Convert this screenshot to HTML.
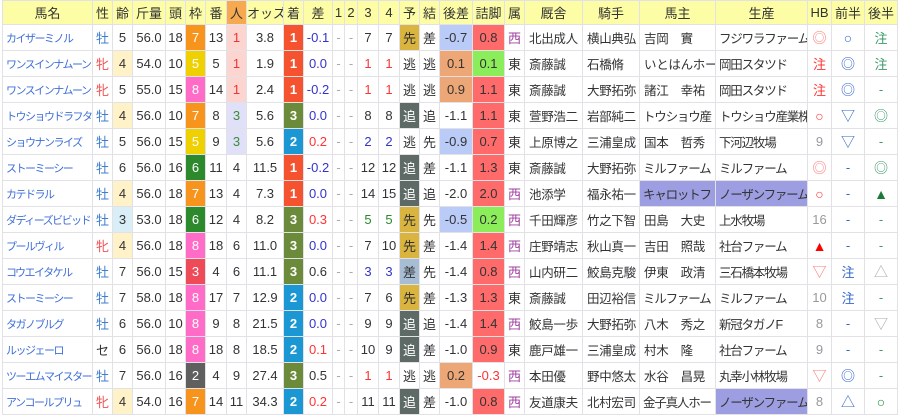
<!DOCTYPE html>
<html><head><meta charset="utf-8"><style>
body{margin:0;background:#fff;width:900px;height:416px;overflow:hidden}
table{position:absolute;left:2px;top:0;width:896px;border-collapse:collapse;table-layout:fixed;font-family:"Liberation Sans","Noto Sans CJK JP",sans-serif;font-size:13px;color:#333}
td,th{border:1px solid #e2e2e6;padding:0;text-align:center;white-space:nowrap;overflow:hidden;height:25px}
th{background:#fdfda6;font-weight:normal;height:23px;font-size:13px}
th.p{background:#f7a950}
td.n{text-align:left;padding-left:3px;color:#3f6fd8;font-size:11px;letter-spacing:-1.5px}
.m{color:#3f7fd0}.f{color:#f05050}
.y{background:#fff2c8}.lb{background:#d9eef6}
.w1{background:#fff}.w2{background:#5f5f5f;color:#fff}.w3{background:#ee4a58;color:#fff}.w5{background:#efd000;color:#fff}.w6{background:#2c8a2c;color:#fff}.w7{background:#f7941d;color:#fff}.w8{background:#ff6cc8;color:#fff}
.p1{background:#fdd5d0;color:#e33}.p3{background:#e0e0f8;color:#3a8a3a}
.c1{background:#f5532f;color:#fff;font-weight:bold}.c2{background:#1b97d3;color:#fff;font-weight:bold}.c3{background:#6b8a3a;color:#fff;font-weight:bold}
.bl{color:#33c}.rd{color:#f33}.gr{color:#2a8a2a}.g{color:#999}.dg{color:#aaa}
.k{background:#d9b43e}.o{background:#5e6a66;color:#fff}.s{background:#a7bdd3}
.lbb{background:#b9cbf6}.or{background:#eda776}
.rr{background:#ff6b6b}.gg{background:#8ced5a}
.we{color:#a040a0}
.l{text-align:left;padding-left:4px;font-size:12.5px;letter-spacing:-0.3px}
.b{letter-spacing:-1.2px;padding-left:3px}
.hl{background:#9d9de2}
.pk{color:#f77}.bu{color:#36c}.gn{color:#3a9a6a}
.sy{font-size:14px}
</style></head><body>
<table>
<colgroup><col style="width:90px"><col style="width:20px"><col style="width:20px"><col style="width:33px"><col style="width:20px"><col style="width:20px"><col style="width:21px"><col style="width:20px"><col style="width:37px"><col style="width:20px"><col style="width:29px"><col style="width:12px"><col style="width:13px"><col style="width:21px"><col style="width:21px"><col style="width:20px"><col style="width:20px"><col style="width:33px"><col style="width:32px"><col style="width:20px"><col style="width:58px"><col style="width:57px"><col style="width:76px"><col style="width:92px"><col style="width:24px"><col style="width:33px"><col style="width:33px"></colgroup>
<tr><th>馬名</th><th>性</th><th>齢</th><th>斤量</th><th>頭</th><th>枠</th><th>番</th><th class="p">人</th><th>オッズ</th><th>着</th><th>差</th><th>1</th><th>2</th><th>3</th><th>4</th><th>予</th><th>結</th><th>後差</th><th>詰脚</th><th>属</th><th>厩舎</th><th>騎手</th><th>馬主</th><th>生産</th><th>HB</th><th>前半</th><th>後半</th></tr>
<tr><td class="n">カイザーミノル</td><td class="m">牡</td><td>5</td><td>56.0</td><td>18</td><td class="w7">7</td><td>13</td><td class="p1">1</td><td>3.8</td><td class="c1">1</td><td class="bl">-0.1</td><td class="dg">-</td><td class="dg">-</td><td>7</td><td>7</td><td class="k">先</td><td>差</td><td class="lbb">-0.7</td><td class="rr">0.8</td><td class="we">西</td><td class="l">北出成人</td><td class="l">横山典弘</td><td class="l">吉岡　實</td><td class="l b">フジワラファーム</td><td class="pk sy">◎</td><td class="bu sy">○</td><td class="gn">注</td></tr>
<tr><td class="n">ワンスインナムーン</td><td class="f">牝</td><td class="y">4</td><td>54.0</td><td>10</td><td class="w5">5</td><td>5</td><td class="p1">1</td><td>1.9</td><td class="c1">1</td><td class="bl">0.0</td><td class="dg">-</td><td class="dg">-</td><td class="rd">1</td><td class="rd">1</td><td>逃</td><td>逃</td><td class="or">0.1</td><td class="gg">0.1</td><td>東</td><td class="l">斎藤誠</td><td class="l">石橋脩</td><td class="l">いとはんホー</td><td class="l b">岡田スタツド</td><td class="rd">注</td><td class="bu sy">◎</td><td class="gn">注</td></tr>
<tr><td class="n">ワンスインナムーン</td><td class="f">牝</td><td>5</td><td>55.0</td><td>15</td><td class="w8">8</td><td>14</td><td class="p1">1</td><td>2.4</td><td class="c1">1</td><td class="bl">-0.2</td><td class="dg">-</td><td class="dg">-</td><td class="rd">1</td><td class="rd">1</td><td>逃</td><td>逃</td><td class="or">0.9</td><td class="rr">1.1</td><td>東</td><td class="l">斎藤誠</td><td class="l">大野拓弥</td><td class="l">諸江　幸祐</td><td class="l b">岡田スタツド</td><td class="rd">注</td><td class="bu sy">◎</td><td class="gn">-</td></tr>
<tr><td class="n">トウショウドラフタ</td><td class="m">牡</td><td class="y">4</td><td>56.0</td><td>10</td><td class="w7">7</td><td>8</td><td class="p3">3</td><td>5.6</td><td class="c3">3</td><td class="bl">0.0</td><td class="dg">-</td><td class="dg">-</td><td>8</td><td>8</td><td class="o">追</td><td>追</td><td>-1.1</td><td class="rr">1.1</td><td>東</td><td class="l">萱野浩二</td><td class="l">岩部純二</td><td class="l b">トウショウ産</td><td class="l b">トウショウ産業株</td><td class="rd sy">○</td><td class="bu sy">▽</td><td class="gn sy">◎</td></tr>
<tr><td class="n">ショウナンライズ</td><td class="m">牡</td><td>5</td><td>56.0</td><td>15</td><td class="w5">5</td><td>9</td><td class="p3">3</td><td>5.6</td><td class="c2">2</td><td class="rd">0.2</td><td class="dg">-</td><td class="dg">-</td><td class="bl">2</td><td class="bl">2</td><td>逃</td><td>先</td><td class="lbb">-0.9</td><td class="rr">0.7</td><td>東</td><td class="l">上原博之</td><td class="l">三浦皇成</td><td class="l">国本　哲秀</td><td class="l b">下河辺牧場</td><td class="g">9</td><td class="bu sy">▽</td><td class="gn">-</td></tr>
<tr><td class="n">ストーミーシー</td><td class="m">牡</td><td>6</td><td>56.0</td><td>16</td><td class="w6">6</td><td>11</td><td>4</td><td>11.5</td><td class="c1">1</td><td class="bl">-0.2</td><td class="dg">-</td><td class="dg">-</td><td>12</td><td>12</td><td class="o">追</td><td>差</td><td>-1.1</td><td class="rr">1.3</td><td>東</td><td class="l">斎藤誠</td><td class="l">大野拓弥</td><td class="l b">ミルファーム</td><td class="l b">ミルファーム</td><td class="pk sy">◎</td><td class="bu">-</td><td class="gn sy">◎</td></tr>
<tr><td class="n">カテドラル</td><td class="m">牡</td><td class="y">4</td><td>56.0</td><td>18</td><td class="w7">7</td><td>13</td><td>4</td><td>7.3</td><td class="c1">1</td><td class="bl">0.0</td><td class="dg">-</td><td class="dg">-</td><td>14</td><td>15</td><td class="o">追</td><td>追</td><td>-2.0</td><td class="rr">2.0</td><td class="we">西</td><td class="l">池添学</td><td class="l">福永祐一</td><td class="l b hl">キャロットフ</td><td class="l b hl">ノーザンファーム</td><td class="rd sy">○</td><td class="bu">-</td><td class="sy" style="color:#1a7a3a">▲</td></tr>
<tr><td class="n">ダディーズビビッド</td><td class="m">牡</td><td class="lb">3</td><td>53.0</td><td>18</td><td class="w6">6</td><td>12</td><td>4</td><td>8.2</td><td class="c3">3</td><td class="rd">0.3</td><td class="dg">-</td><td class="dg">-</td><td class="gr">5</td><td class="gr">5</td><td class="k">先</td><td>先</td><td class="lbb">-0.5</td><td class="gg">0.2</td><td class="we">西</td><td class="l">千田輝彦</td><td class="l">竹之下智</td><td class="l">田島　大史</td><td class="l b">上水牧場</td><td class="g">16</td><td class="bu">-</td><td class="gn">-</td></tr>
<tr><td class="n">プールヴィル</td><td class="f">牝</td><td class="y">4</td><td>56.0</td><td>18</td><td class="w8">8</td><td>18</td><td>6</td><td>11.0</td><td class="c3">3</td><td class="bl">0.0</td><td class="dg">-</td><td class="dg">-</td><td>7</td><td>10</td><td class="k">先</td><td>差</td><td>-1.4</td><td class="rr">1.4</td><td class="we">西</td><td class="l">庄野靖志</td><td class="l">秋山真一</td><td class="l">吉田　照哉</td><td class="l b">社台ファーム</td><td class="sy" style="color:#f00">▲</td><td class="bu">-</td><td class="gn">-</td></tr>
<tr><td class="n">コウエイタケル</td><td class="m">牡</td><td>7</td><td>56.0</td><td>15</td><td class="w3">3</td><td>4</td><td>6</td><td>11.1</td><td class="c3">3</td><td>0.6</td><td class="dg">-</td><td class="dg">-</td><td class="bl">3</td><td class="bl">3</td><td class="s">差</td><td>先</td><td>-1.4</td><td class="rr">0.8</td><td class="we">西</td><td class="l">山内研二</td><td class="l">鮫島克駿</td><td class="l">伊東　政清</td><td class="l b">三石橋本牧場</td><td class="pk sy">▽</td><td class="bu">注</td><td class="dg sy">△</td></tr>
<tr><td class="n">ストーミーシー</td><td class="m">牡</td><td>7</td><td>58.0</td><td>18</td><td class="w8">8</td><td>17</td><td>7</td><td>12.9</td><td class="c2">2</td><td class="bl">0.0</td><td class="dg">-</td><td class="dg">-</td><td>7</td><td>6</td><td class="k">先</td><td>差</td><td>-1.3</td><td class="rr">1.3</td><td>東</td><td class="l">斎藤誠</td><td class="l">田辺裕信</td><td class="l b">ミルファーム</td><td class="l b">ミルファーム</td><td class="g">10</td><td class="bu">注</td><td class="gn">-</td></tr>
<tr><td class="n">タガノブルグ</td><td class="m">牡</td><td>6</td><td>56.0</td><td>10</td><td class="w8">8</td><td>9</td><td>8</td><td>21.5</td><td class="c2">2</td><td class="bl">0.0</td><td class="dg">-</td><td class="dg">-</td><td>9</td><td>9</td><td class="o">追</td><td>追</td><td>-1.4</td><td class="rr">1.4</td><td class="we">西</td><td class="l">鮫島一歩</td><td class="l">大野拓弥</td><td class="l">八木　秀之</td><td class="l b">新冠タガノF</td><td class="g">8</td><td class="bu">-</td><td class="dg sy">▽</td></tr>
<tr><td class="n">ルッジェーロ</td><td>セ</td><td>6</td><td>56.0</td><td>18</td><td class="w8">8</td><td>18</td><td>8</td><td>18.5</td><td class="c2">2</td><td class="rd">0.1</td><td class="dg">-</td><td class="dg">-</td><td>10</td><td>9</td><td class="o">追</td><td>差</td><td>-1.0</td><td class="rr">0.9</td><td>東</td><td class="l">鹿戸雄一</td><td class="l">三浦皇成</td><td class="l">村木　隆</td><td class="l b">社台ファーム</td><td class="g">9</td><td class="bu">-</td><td class="gn">-</td></tr>
<tr><td class="n">ツーエムマイスター</td><td class="m">牡</td><td>7</td><td>56.0</td><td>16</td><td class="w2">2</td><td>4</td><td>9</td><td>27.4</td><td class="c3">3</td><td>0.5</td><td class="dg">-</td><td class="dg">-</td><td class="rd">1</td><td class="rd">1</td><td>逃</td><td>逃</td><td class="or">0.2</td><td class="rd">-0.3</td><td class="we">西</td><td class="l">本田優</td><td class="l">野中悠太</td><td class="l">水谷　昌晃</td><td class="l b">丸幸小林牧場</td><td class="pk sy">▽</td><td class="bu sy">◎</td><td class="gn">-</td></tr>
<tr><td class="n">アンコールプリュ</td><td class="f">牝</td><td class="y">4</td><td>54.0</td><td>16</td><td class="w7">7</td><td>14</td><td>11</td><td>34.3</td><td class="c2">2</td><td class="rd">0.2</td><td class="dg">-</td><td class="dg">-</td><td>11</td><td>11</td><td class="o">追</td><td>差</td><td>-1.0</td><td class="rr">0.8</td><td class="we">西</td><td class="l">友道康夫</td><td class="l">北村宏司</td><td class="l b">金子真人ホー</td><td class="l b hl">ノーザンファーム</td><td class="g">8</td><td class="bu sy">△</td><td class="sy" style="color:#1a8a3a">○</td></tr>
</table>
</body></html>
